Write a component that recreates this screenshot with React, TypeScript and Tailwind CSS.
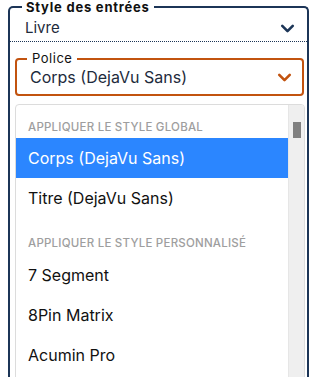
import { ChevronDown } from 'lucide-react'

const globalFonts = ['Corps (DejaVu Sans)', 'Titre (DejaVu Sans)']
const customFonts = ['7 Segment', '8Pin Matrix', 'Acumin Pro']

function Option({ label, selected = false }: { label: string; selected?: boolean }) {
  return (
    <div
      className={`h-10 flex items-center px-3 text-[16px] ${
        selected ? 'bg-[#2b86ff] text-white' : 'text-[#111111]'
      }`}
    >
      {label}
    </div>
  )
}

export default function App() {
  return (
    <div className="w-[312px] h-[377px] overflow-hidden bg-white font-['Inter',sans-serif]">
      <fieldset className="ml-2 mr-[3px] border-2 border-b-0 border-[#1c3557] rounded-t-[5px] h-[400px]">
        <legend className="ml-3 px-1 text-[13px] leading-[14px] font-bold tracking-[0.06em] text-[#111]">
          Style des entrées
        </legend>

        {/* current value */}
        <div className="flex items-center justify-between pl-[15px] pr-[9px] h-[26px] mt-[1px]">
          <span className="text-[15px] text-[#1e2b3c]">Livre</span>
          <ChevronDown size={21} strokeWidth={3} className="text-[#1c3557]" />
        </div>
        <div className="border-b border-dotted border-[#1c3557]" />

        {/* font select */}
        <fieldset className="ml-[5px] mr-[3px] mt-[10px] border-2 border-[#c2530f] rounded-[4px] h-[44px]">
          <legend className="ml-[10px] px-[5px] text-[13px] leading-[13px] tracking-[0.04em] text-[#111]">
            Police
          </legend>
          <div className="flex items-center justify-between pl-[13px] pr-[7px]">
            <span className="text-[16px] text-[#1e2b3c]">Corps (DejaVu Sans)</span>
            <ChevronDown size={21} strokeWidth={3} className="text-[#c2530f]" />
          </div>
        </fieldset>

        {/* dropdown list */}
        <div className="ml-[5px] mr-[2px] mt-[8px] border border-[#dcdcdc] rounded-[4px] flex h-[300px] overflow-hidden">
          <div className="flex-1">
            <div className="pt-[14px] pb-[3px] px-3 text-[11.5px] leading-4 font-medium tracking-[0.02em] text-[#9e9e9e]">
              APPLIQUER LE STYLE GLOBAL
            </div>
            {globalFonts.map((f, i) => (
              <Option key={f} label={f} selected={i === 0} />
            ))}
            <div className="pt-[17px] pb-[4px] px-3 text-[11.5px] leading-4 font-medium tracking-[0.02em] text-[#9e9e9e]">
              APPLIQUER LE STYLE PERSONNALISÉ
            </div>
            {customFonts.map((f) => (
              <Option key={f} label={f} />
            ))}
          </div>
          <div className="w-4 bg-[#efefef] border-l border-[#e6e6e6] pt-[17px] flex justify-center">
            <div className="w-2 h-4 bg-[#808080]" />
          </div>
        </div>
      </fieldset>
    </div>
  )
}
